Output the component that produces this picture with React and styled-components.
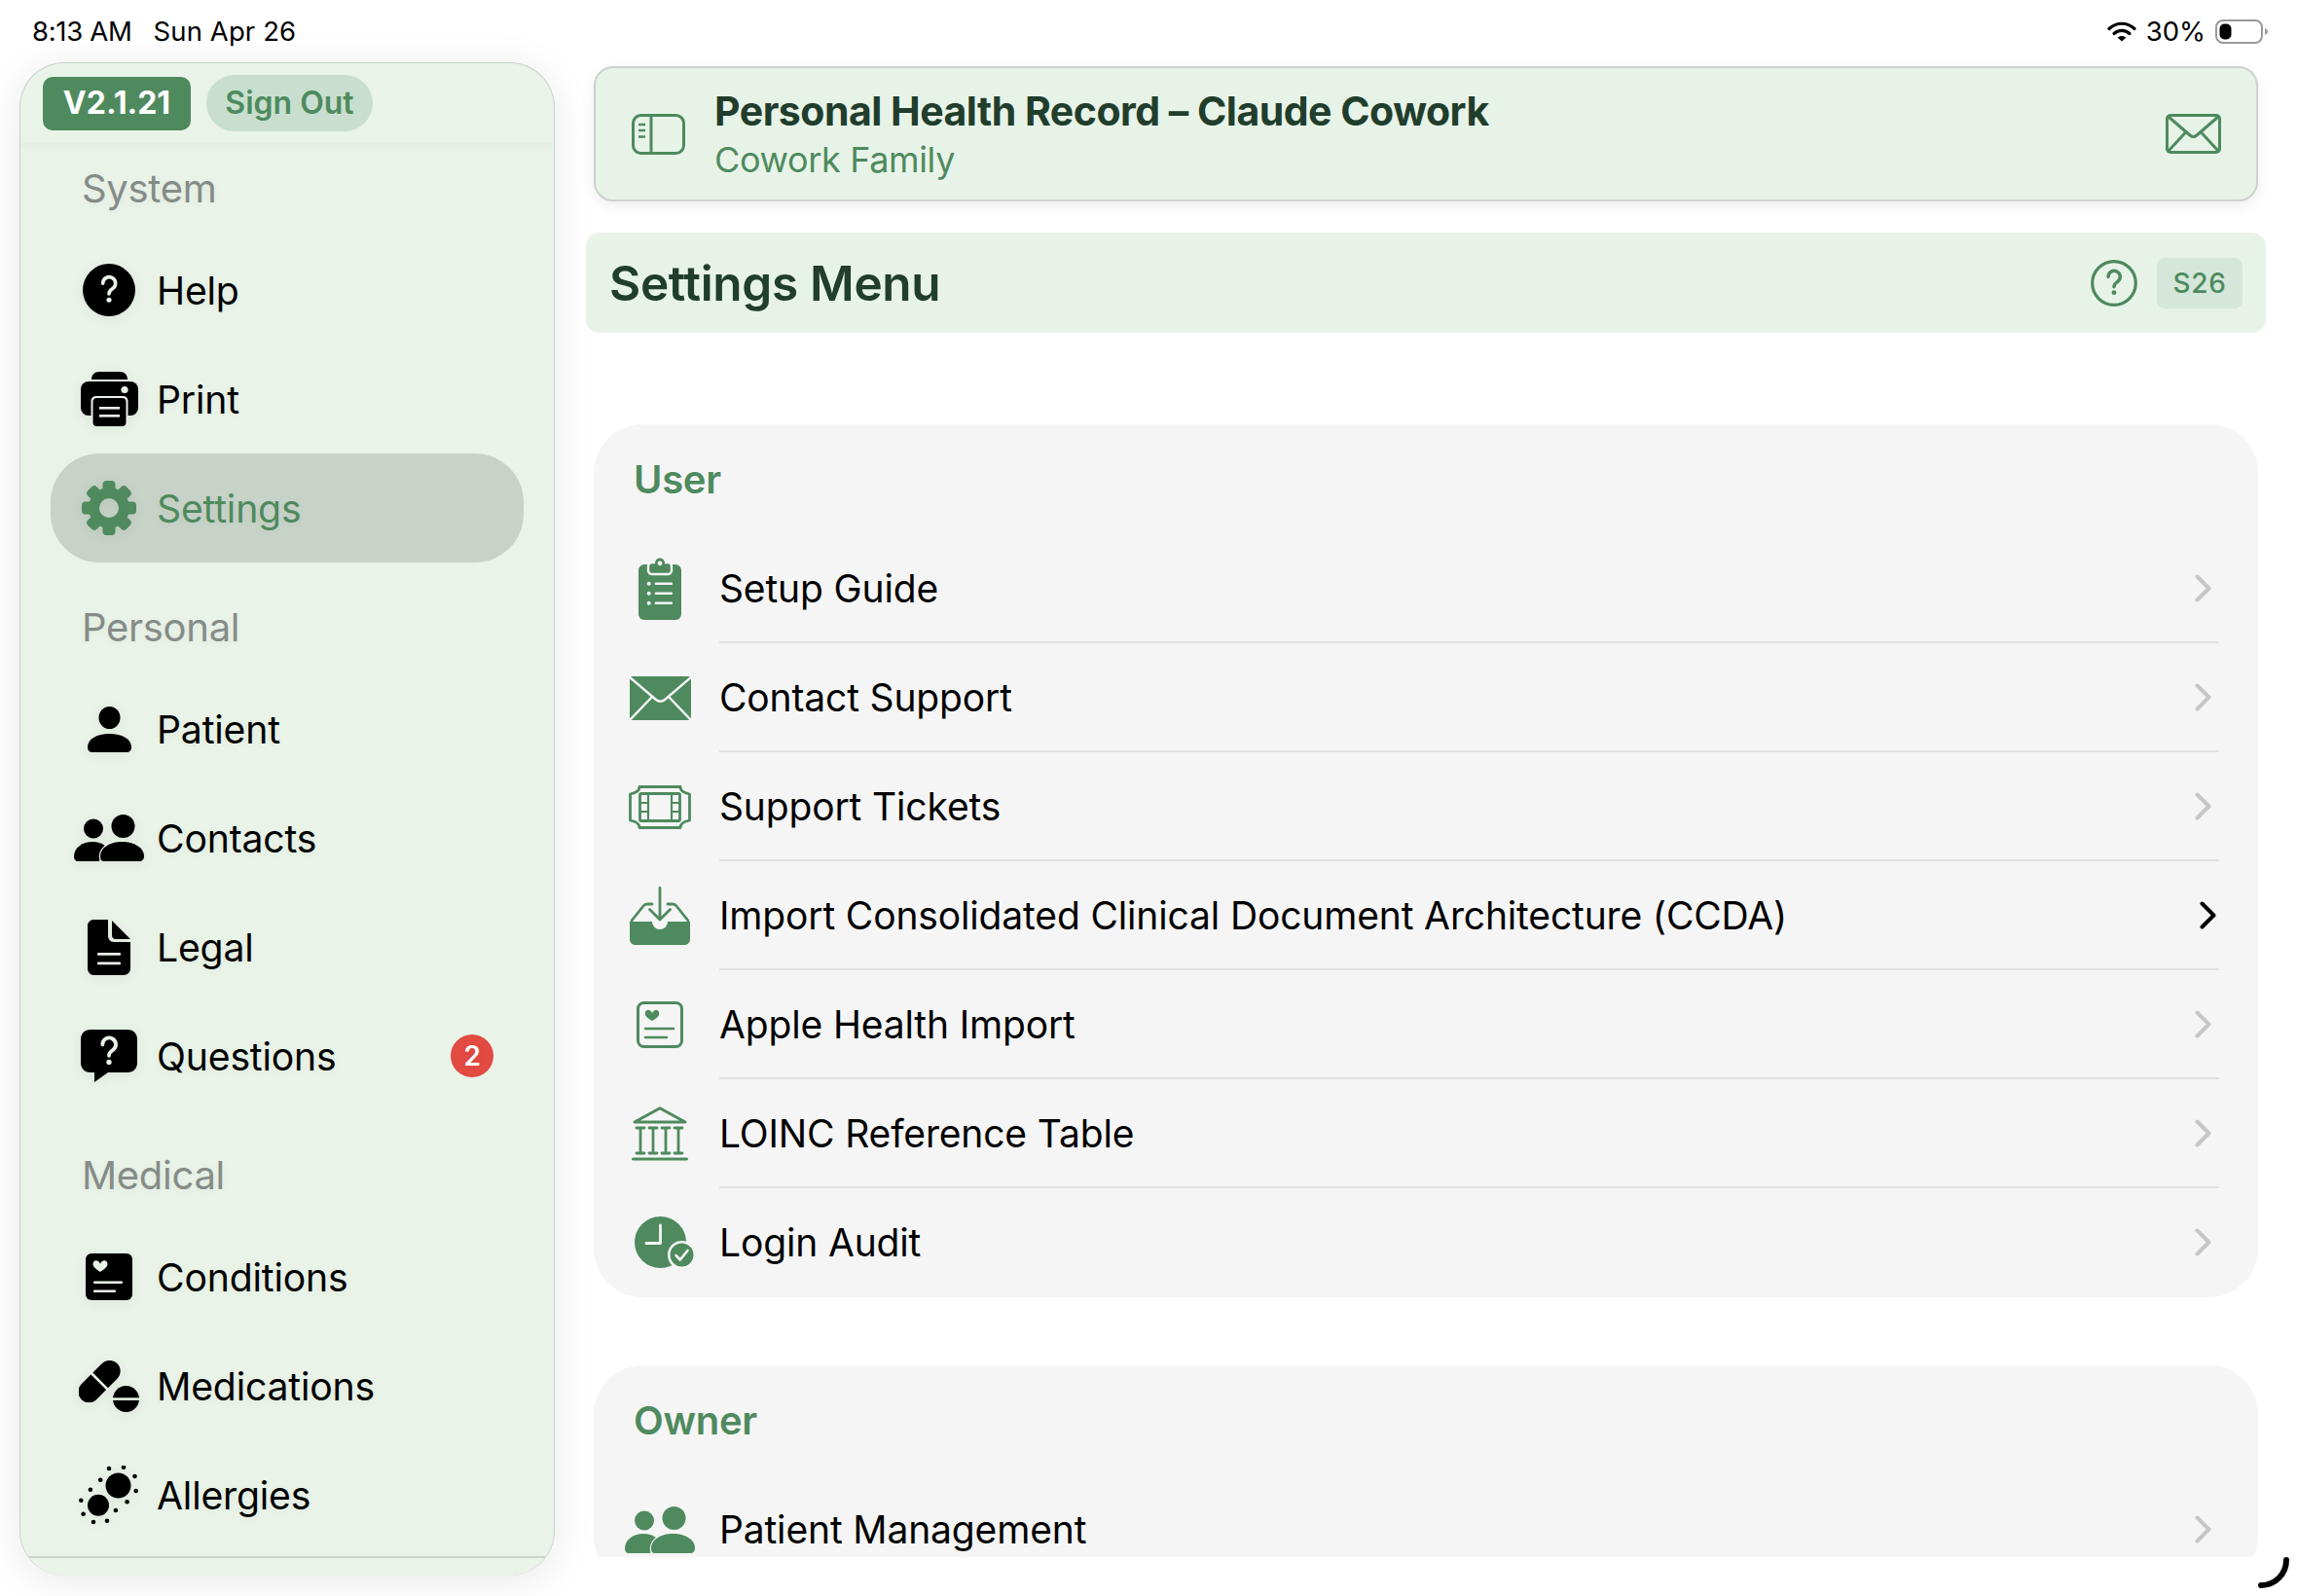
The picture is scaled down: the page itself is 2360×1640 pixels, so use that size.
import React from "react";
import styled, { createGlobalStyle } from "styled-components";

const GREEN = "#4e8a5e";
const DARK = "#213d2c";
const SIDE_BG = "#e9f3e8";
const ACTIVE_BG = "#c8d3c8";
const CARD_BG = "#f5f5f5";

const GlobalStyle = createGlobalStyle`
  html, body {
    margin: 0;
    padding: 0;
    background: #fff;
    font-family: Inter, "Liberation Sans", sans-serif;
  }
  * { box-sizing: border-box; }
`;

const Page = styled.div`
  position: relative;
  width: 2360px;
  height: 1640px;
  overflow: hidden;
  background: #fff;
`;

/* ---------- status bar ---------- */
const StatusBar = styled.div`
  height: 64px;
  display: flex;
  align-items: center;
  padding: 0 30px 0 33px;
  font-size: 27.5px;
  color: #000;
`;
const StatusTime = styled.span`
  margin-right: 22px;
  letter-spacing: -0.3px;
`;
const StatusDate = styled.span`
  letter-spacing: 0.1px;
`;
const StatusRight = styled.div`
  margin-left: auto;
  display: flex;
  align-items: center;
  gap: 10px;
`;

/* ---------- layout ---------- */
const Body = styled.div`
  display: flex;
  align-items: flex-start;
  padding-left: 20px;
`;
const Sidebar = styled.aside`
  width: 550px;
  height: 1555px;
  flex-shrink: 0;
  display: flex;
  flex-direction: column;
  background: ${SIDE_BG};
  border: 1.5px solid #c9d1cb;
  border-bottom: none;
  border-radius: 46px;
  box-shadow: 0 6px 44px rgba(0, 0, 0, 0.09);
  overflow: hidden;
`;
const SideHeader = styled.div`
  height: 82px;
  flex-shrink: 0;
  display: flex;
  align-items: center;
  gap: 16px;
  padding-left: 23px;
  box-shadow: 0 3px 8px rgba(0, 0, 0, 0.035);
`;
const VersionBadge = styled.span`
  width: 152px;
  height: 55px;
  padding-bottom: 2px;
  display: flex;
  align-items: center;
  justify-content: center;
  background: ${GREEN};
  border-radius: 10px;
  color: #fff;
  font-size: 32px;
  font-weight: 700;
`;
const SignOut = styled.button`
  width: 171px;
  height: 58px;
  border: none;
  padding: 0 0 2px;
  border-radius: 29px;
  background: #c8dfcf;
  color: ${GREEN};
  font-family: inherit;
  font-size: 32px;
  font-weight: 600;
`;
const Nav = styled.nav`
  flex: 1;
  padding-top: 23px;
  text-shadow: 0 2px 8px rgba(0, 0, 0, 0.05);
`;
const NavGroup = styled.div`
  & + & {
    margin-top: 43px;
  }
`;
const GroupLabel = styled.div`
  height: 48px;
  line-height: 48px;
  margin: 0 0 24px 63px;
  font-size: 40px;
  font-weight: 420;
  color: #858c88;
  letter-spacing: -0.3px;
`;
const NavRow = styled.div`
  position: relative;
  height: 112px;
  margin: 0 31px;
  padding-left: 20px;
  display: flex;
  align-items: center;
  border-radius: 50px;
  background: ${(p) => (p.$active ? ACTIVE_BG : "transparent")};
  color: ${(p) => (p.$active ? GREEN : "#000")};
  font-size: 39.2px;
  letter-spacing: -0.2px;
`;
const NavIcon = styled.span`
  width: 80px;
  flex-shrink: 0;
  display: flex;
  align-items: center;
  justify-content: center;
  margin-right: 9px;
  filter: drop-shadow(0 2px 6px rgba(0, 0, 0, 0.06));
`;
const CountBadge = styled.span`
  position: absolute;
  right: 31px;
  top: 34px;
  width: 44px;
  height: 44px;
  border-radius: 50%;
  display: flex;
  align-items: center;
  justify-content: center;
  background: #e24a42;
  color: #fff;
  font-size: 28px;
  font-weight: 600;
`;
const SideFooter = styled.div`
  height: 20px;
  flex-shrink: 0;
  margin: 0 7px;
  border-top: 2px solid #c9d4cc;
`;

const Main = styled.main`
  width: 1726px;
  margin-left: 32px;
  padding-top: 4px;
`;
const HeaderCard = styled.header`
  height: 139px;
  margin: 0 8px;
  padding: 0 36px 0 37px;
  display: flex;
  align-items: center;
  background: #e8f3e8;
  border: 2px solid #cdd2ce;
  border-radius: 20px;
  box-shadow: 0 5px 14px rgba(0, 0, 0, 0.07);
`;
const HeaderText = styled.div`
  margin-left: 30px;
  flex: 1;
`;
const AppTitle = styled.div`
  font-size: 41px;
  line-height: 52px;
  font-weight: 700;
  color: ${DARK};
  letter-spacing: -0.5px;
`;
const AppSub = styled.div`
  font-size: 36px;
  line-height: 46px;
  margin-top: 1px;
  color: ${GREEN};
  letter-spacing: -0.35px;
`;
const MenuBar = styled.div`
  height: 103px;
  margin-top: 32px;
  padding: 0 24px 0 24px;
  display: flex;
  align-items: center;
  background: #e8f3e8;
  border-radius: 14px;
`;
const MenuTitle = styled.h1`
  flex: 1;
  margin: 0;
  font-size: 49.5px;
  font-weight: 600;
  color: ${DARK};
  letter-spacing: -0.3px;
`;
const ScreenCode = styled.span`
  width: 88px;
  height: 52px;
  margin-left: 20px;
  display: flex;
  align-items: center;
  justify-content: center;
  background: #d5e7da;
  border-radius: 8px;
  color: ${GREEN};
  font-size: 28px;
  font-weight: 500;
  letter-spacing: 0.6px;
`;
const Scroller = styled.div`
  height: 1258px;
  overflow: hidden;
  padding: 94px 8px 0;
`;
const Card = styled.section`
  background: ${CARD_BG};
  border-radius: 50px;
  & + & {
    margin-top: 70px;
  }
`;
const CardTitle = styled.h2`
  height: 113px;
  margin: 0;
  padding: 29px 0 0 41px;
  font-size: 40px;
  line-height: 56px;
  font-weight: 600;
  color: ${GREEN};
  letter-spacing: -0.3px;
`;
const MenuRow = styled.div`
  height: 112px;
  display: flex;
  align-items: stretch;
`;
const RowIcon = styled.span`
  width: 92px;
  margin-left: 22px;
  margin-right: 15px;
  flex-shrink: 0;
  display: flex;
  align-items: center;
  justify-content: center;
`;
const RowBody = styled.div`
  flex: 1;
  margin-right: 40px;
  padding-right: ${(p) => (p.$hot ? "3px" : "8px")};
  display: flex;
  align-items: center;
  justify-content: space-between;
  border-bottom: 2px solid ${(p) => (p.$last ? "transparent" : "#e2e2e2")};
  font-size: 39px;
  color: #000;
  letter-spacing: -0.15px;
`;
const ClockSvg = styled.svg`
  margin-left: 11px;
`;
const BusyArc = styled.svg`
  position: absolute;
  right: 8px;
  bottom: 8px;
`;

/* ---------- drawings ---------- */
const Question = ({ cx, cy, s = 1, color }) => (
  <g transform={`translate(${cx} ${cy}) scale(${s})`}>
    <path
      d="M-7 -6.5a7.2 7.2 0 1 1 11.4 5.8C1.8 1.1 0 2.2 0 5.5"
      fill="none"
      stroke={color}
      strokeWidth="4"
      strokeLinecap="round"
    />
    <circle cx="0" cy="12.5" r="2.8" fill={color} />
  </g>
);

const HelpIcon = () => (
  <svg width="54" height="54" viewBox="0 0 54 54">
    <circle cx="27" cy="27" r="27" fill="#000" />
    <Question cx={27} cy={26} s={0.9} color={SIDE_BG} />
  </svg>
);

const PrintIcon = () => (
  <svg width="59" height="56" viewBox="0 0 59 56">
    <path d="M11 8C11 3 14 0 19 0H40C45 0 48 3 48 8Z" fill="#000" />
    <rect x="0" y="10" width="59" height="35" rx="8" fill="#000" />
    <rect x="10.5" y="25" width="38" height="33" rx="5" fill={SIDE_BG} />
    <rect x="12.5" y="27" width="34" height="29" rx="4" fill="#000" />
    <circle cx="45" cy="18.5" r="3.6" fill={SIDE_BG} />
    <rect x="19" y="36" width="21" height="2.6" fill={SIDE_BG} />
    <rect x="19" y="44" width="21" height="2.6" fill={SIDE_BG} />
  </svg>
);

const GearIcon = () => (
  <svg width="56" height="56" viewBox="0 0 56 56">
    {[0, 45, 90, 135, 180, 225, 270, 315].map((a) => (
      <rect
        key={a}
        x="21.5"
        y="0"
        width="13"
        height="14"
        rx="4"
        fill={GREEN}
        transform={`rotate(${a} 28 28)`}
      />
    ))}
    <circle cx="28" cy="28" r="15.5" fill="none" stroke={GREEN} strokeWidth="11" />
  </svg>
);

const PersonIcon = () => (
  <svg width="45" height="47" viewBox="0 0 45 47">
    <ellipse cx="22.5" cy="11.5" rx="11" ry="11.5" fill="#000" />
    <path d="M0 42C0 33 10 28 22.5 28S45 33 45 42C45 45 43 47 40 47H5C2 47 0 45 0 42Z" fill="#000" />
  </svg>
);

const PeopleIcon = ({ color, gap }) => (
  <svg width="72" height="48" viewBox="0 0 72 48">
    <circle cx="20" cy="14.5" r="10" fill={color} />
    <path d="M0 43C0 34 9 28 19 28C25 28 29 30 32 32L26 48H4C1.5 48 0 46 0 43Z" fill={color} />
    <circle cx="50.5" cy="12" r="12" fill={color} />
    <path
      d="M27 43C27 34 37 28 49.5 28S72 34 72 43C72 46 70 48 67 48H31C28 48 27 46 27 43Z"
      fill={color}
      stroke={gap}
      strokeWidth="2.5"
      paintOrder="stroke"
    />
  </svg>
);

const DocIcon = () => (
  <svg width="44" height="57" viewBox="0 0 44 57">
    <path d="M6 0H21V16C21 20 23 23 27 23H44V50C44 54 41 57 37 57H6C3 57 0 54 0 50V6C0 3 3 0 6 0Z" fill="#000" />
    <path d="M25 1L44 20H29C26.5 20 25 18.5 25 16Z" fill="#000" />
    <rect x="10" y="34" width="24" height="2.8" rx="1" fill={SIDE_BG} />
    <rect x="10" y="43.5" width="24" height="2.8" rx="1" fill={SIDE_BG} />
  </svg>
);

const BubbleIcon = () => (
  <svg width="58" height="54" viewBox="0 0 58 54">
    <path d="M10 0H48C54 0 58 4 58 10V34C58 40 54 44 48 44H28L14 54V44H10C4 44 0 40 0 34V10C0 4 4 0 10 0Z" fill="#000" />
    <Question cx={29} cy={21.5} s={0.95} color={SIDE_BG} />
  </svg>
);

const Heart = ({ x, y, s, color }) => (
  <path
    transform={`translate(${x} ${y}) scale(${s})`}
    d="M0 4C-1 1-4-1-6-1C-9-1-11 1.5-11 4.5C-11 9-5 13 0 16C5 13 11 9 11 4.5C11 1.5 9-1 6-1C4-1 1 1 0 4Z"
    fill={color}
  />
);

const CardHeartIcon = () => (
  <svg width="48" height="48" viewBox="0 0 48 48">
    <rect width="48" height="48" rx="6" fill="#000" />
    <Heart x={15} y={8} s={0.68} color={SIDE_BG} />
    <rect x="8" y="28.5" width="30" height="2.6" rx="1" fill={SIDE_BG} />
    <rect x="8" y="37.5" width="23" height="2.6" rx="1" fill={SIDE_BG} />
  </svg>
);

const PillsIcon = () => (
  <svg width="62" height="53" viewBox="0 0 62 53">
    <g transform="rotate(-45 21 21.5)">
      <rect x="-5" y="10.5" width="52" height="22" rx="11" fill="#000" />
      <rect x="20" y="8" width="2.6" height="27" fill={SIDE_BG} />
    </g>
    <circle cx="48.5" cy="39.5" r="13.5" fill="#000" />
    <rect x="33" y="38.3" width="29" height="2.6" fill={SIDE_BG} />
  </svg>
);

const ALLERGY_DOTS = [
  [31, 3],
  [46, 1.7],
  [57.5, 11],
  [58.7, 26],
  [49.6, 37.3],
  [37.9, 46],
  [29, 56.7],
  [15, 58],
  [4.6, 49.7],
  [2.3, 35.7],
  [11.9, 24.7],
  [22.2, 14.7],
];

const AllergyIcon = () => (
  <svg width="62" height="61" viewBox="0 0 62 61">
    <circle cx="40.5" cy="20.5" r="13" fill="#000" />
    <circle cx="20" cy="40.7" r="11" fill="#000" />
    {ALLERGY_DOTS.map(([x, y]) => (
      <circle key={x} cx={x} cy={y} r="2.3" fill="#000" />
    ))}
  </svg>
);

const SidebarToggleIcon = () => (
  <svg width="55" height="42" viewBox="0 0 55 42" fill="none" stroke={GREEN} strokeWidth="3">
    <rect x="1.5" y="1.5" width="52" height="39" rx="8" />
    <path d="M20 1.5V40.5" />
    <path d="M7 11H14M7 17H14M7 23.5H14" strokeWidth="2.4" />
  </svg>
);

const MailOutlineIcon = () => (
  <svg width="57" height="41" viewBox="0 0 57 41" fill="none" stroke={GREEN} strokeWidth="3" strokeLinejoin="round">
    <rect x="1.5" y="1.5" width="54" height="38" rx="3.5" />
    <path d="M3 3L25 22Q28.5 25 32 22L54 3" />
    <path d="M3 38L21 18.5M54 38L36 18.5" />
  </svg>
);

const QuestionCircleIcon = () => (
  <svg width="48" height="48" viewBox="0 0 48 48">
    <circle cx="24" cy="24" r="22.3" fill="none" stroke={GREEN} strokeWidth="3.2" />
    <Question cx={24} cy={23} s={0.85} color={GREEN} />
  </svg>
);

const ClipboardIcon = () => (
  <svg width="44" height="64" viewBox="0 0 44 64">
    <rect y="7" width="44" height="57" rx="6" fill={GREEN} />
    <rect x="10" y="5" width="24" height="12" rx="4" fill={GREEN} stroke={CARD_BG} strokeWidth="2.4" />
    <circle cx="22" cy="5.5" r="5" fill={GREEN} />
    <circle cx="22" cy="5.8" r="2.4" fill={CARD_BG} />
    {[26.7, 36.7, 46.7].map((y) => (
      <g key={y} fill={CARD_BG}>
        <circle cx="10.7" cy={y} r="2" />
        <rect x="16.7" y={y - 1.2} width="18.3" height="2.4" rx="1" />
      </g>
    ))}
  </svg>
);

const MailFilledIcon = () => (
  <svg width="63" height="45" viewBox="0 0 63 45">
    <rect width="63" height="45" rx="3" fill={GREEN} />
    <g fill="none" stroke={CARD_BG} strokeWidth="2.4">
      <path d="M0 1L27 24Q31.5 27.5 36 24L63 1" />
      <path d="M0 45L23 21M63 45L40 21" />
    </g>
  </svg>
);

const TicketIcon = () => (
  <svg width="64" height="45" viewBox="0 0 64 45" fill="none" stroke={GREEN} strokeWidth="2.8">
    <path d="M11 1.5H53C53 5 55 7.5 62.5 9V36C55 37.5 53 40 53 43.5H11C11 40 9 37.5 1.5 36V9C9 7.5 11 5 11 1.5Z" strokeLinejoin="round" />
    <rect x="11.5" y="8.5" width="41" height="28" rx="1.5" />
    <path d="M20 8.5V36.5M44 8.5V36.5M11.5 18H20M11.5 27H20M44 18H52.5M44 27H52.5" strokeWidth="2.2" />
  </svg>
);

const ImportIcon = () => (
  <svg width="62" height="60" viewBox="0 0 62 60" fill="none">
    <path d="M0 36H62V54C62 57.5 59.5 60 56 60H6C2.5 60 0 57.5 0 54Z" fill={GREEN} />
    <circle cx="31" cy="36" r="8" fill={CARD_BG} />
    <g stroke={GREEN} strokeWidth="2.8" strokeLinecap="round" strokeLinejoin="round">
      <path d="M2 35L14 20Q15.5 18 18 18H23M60 35L48 20Q46.5 18 44 18H39" />
      <path d="M31 1.5V34M20.5 23.5L31 34L41.5 23.5" />
    </g>
  </svg>
);

const HealthCardIcon = () => (
  <svg width="48" height="48" viewBox="0 0 48 48" fill="none">
    <rect x="1.5" y="1.5" width="45" height="45" rx="6" stroke={GREEN} strokeWidth="3" />
    <Heart x={16} y={9.5} s={0.66} color={GREEN} />
    <path d="M9 28H38M9 37H31" stroke={GREEN} strokeWidth="2.6" strokeLinecap="round" />
  </svg>
);

const BuildingIcon = () => (
  <svg width="58" height="56" viewBox="0 0 58 56" fill="none" stroke={GREEN} strokeWidth="3" strokeLinecap="round" strokeLinejoin="round">
    <path d="M3 16L29 1.8L55 16Z" />
    {[9, 22, 35, 48].map((x) => (
      <path key={x} d={`M${x} 22V47M${x - 4} 22H${x + 4}M${x - 4} 48H${x + 4}`} strokeWidth="2.8" />
    ))}
    <path d="M1.5 54H56.5" />
  </svg>
);

const ClockCheckIcon = () => (
  <ClockSvg width="63" height="54" viewBox="0 0 63 54">
    <circle cx="26.5" cy="26.5" r="26.5" fill={GREEN} />
    <path d="M26.5 9V27.5H12" fill="none" stroke={CARD_BG} strokeWidth="2.8" strokeLinecap="round" strokeLinejoin="round" />
    <circle cx="48.5" cy="39.5" r="13.3" fill={GREEN} stroke={CARD_BG} strokeWidth="2.6" />
    <path d="M42.5 40L46.8 44.5L54.5 35" fill="none" stroke={CARD_BG} strokeWidth="2.6" strokeLinecap="round" strokeLinejoin="round" />
  </ClockSvg>
);

const Chevron = ({ hot }) => (
  <svg width="17" height="29" viewBox="0 0 17 29" fill="none">
    <path
      d="M2.5 2.5L14.5 14.5L2.5 26.5"
      stroke={hot ? "#000" : "#c6c6c6"}
      strokeWidth="4"
      strokeLinecap="round"
      strokeLinejoin="round"
    />
  </svg>
);

const WifiIcon = () => (
  <svg width="30" height="21" viewBox="0 0 30 21" fill="none" stroke="#000" strokeLinecap="round">
    <path d="M2 7.5C9.5 0.5 20.5 0.5 28 7.5" strokeWidth="3.2" />
    <path d="M7 12.5C11.5 8.3 18.5 8.3 23 12.5" strokeWidth="3.2" />
    <path d="M15 20.5L10.5 16.5C13 14.4 17 14.4 19.5 16.5Z" fill="#000" stroke="none" />
  </svg>
);

const BatteryIcon = () => (
  <svg width="54" height="25" viewBox="0 0 54 25">
    <rect x="1" y="1" width="47" height="23" rx="7" fill="none" stroke="#999" strokeWidth="2" />
    <rect x="4.5" y="4.5" width="12" height="16" rx="5" fill="#000" />
    <path d="M51 9C53 10 54 11 54 12.5S53 15 51 16Z" fill="#999" />
  </svg>
);

/* ---------- content ---------- */
const NAV = [
  {
    label: "System",
    rows: [
      { name: "Help", icon: <HelpIcon /> },
      { name: "Print", icon: <PrintIcon /> },
      { name: "Settings", icon: <GearIcon />, active: true },
    ],
  },
  {
    label: "Personal",
    rows: [
      { name: "Patient", icon: <PersonIcon /> },
      { name: "Contacts", icon: <PeopleIcon color="#000" gap={SIDE_BG} /> },
      { name: "Legal", icon: <DocIcon /> },
      { name: "Questions", icon: <BubbleIcon />, count: 2 },
    ],
  },
  {
    label: "Medical",
    rows: [
      { name: "Conditions", icon: <CardHeartIcon /> },
      { name: "Medications", icon: <PillsIcon /> },
      { name: "Allergies", icon: <AllergyIcon /> },
    ],
  },
];

const USER_ROWS = [
  { name: "Setup Guide", icon: <ClipboardIcon /> },
  { name: "Contact Support", icon: <MailFilledIcon /> },
  { name: "Support Tickets", icon: <TicketIcon /> },
  { name: "Import Consolidated Clinical Document Architecture (CCDA)", icon: <ImportIcon />, hot: true },
  { name: "Apple Health Import", icon: <HealthCardIcon /> },
  { name: "LOINC Reference Table", icon: <BuildingIcon /> },
  { name: "Login Audit", icon: <ClockCheckIcon /> },
];

const OWNER_ROWS = [
  { name: "Patient Management", icon: <PeopleIcon color={GREEN} gap={CARD_BG} /> },
];

const MenuCard = ({ title, rows }) => (
  <Card>
    <CardTitle>{title}</CardTitle>
    {rows.map((r, i) => (
      <MenuRow key={r.name}>
        <RowIcon>{r.icon}</RowIcon>
        <RowBody $hot={r.hot} $last={i === rows.length - 1}>
          <span>{r.name}</span>
          <Chevron hot={r.hot} />
        </RowBody>
      </MenuRow>
    ))}
  </Card>
);

export default function App() {
  return (
    <Page>
      <GlobalStyle />
      <StatusBar>
        <StatusTime>8:13 AM</StatusTime>
        <StatusDate>Sun Apr 26</StatusDate>
        <StatusRight>
          <WifiIcon />
          <span>30%</span>
          <BatteryIcon />
        </StatusRight>
      </StatusBar>
      <Body>
        <Sidebar>
          <SideHeader>
            <VersionBadge>V2.1.21</VersionBadge>
            <SignOut>Sign Out</SignOut>
          </SideHeader>
          <Nav>
            {NAV.map((g) => (
              <NavGroup key={g.label}>
                <GroupLabel>{g.label}</GroupLabel>
                {g.rows.map((r) => (
                  <NavRow key={r.name} $active={r.active}>
                    <NavIcon>{r.icon}</NavIcon>
                    {r.name}
                    {r.count && <CountBadge>{r.count}</CountBadge>}
                  </NavRow>
                ))}
              </NavGroup>
            ))}
          </Nav>
          <SideFooter />
        </Sidebar>
        <Main>
          <HeaderCard>
            <SidebarToggleIcon />
            <HeaderText>
              <AppTitle>Personal Health Record – Claude Cowork</AppTitle>
              <AppSub>Cowork Family</AppSub>
            </HeaderText>
            <MailOutlineIcon />
          </HeaderCard>
          <MenuBar>
            <MenuTitle>Settings Menu</MenuTitle>
            <QuestionCircleIcon />
            <ScreenCode>S26</ScreenCode>
          </MenuBar>
          <Scroller>
            <MenuCard title="User" rows={USER_ROWS} />
            <MenuCard title="Owner" rows={OWNER_ROWS} />
          </Scroller>
        </Main>
      </Body>
      <BusyArc width="32" height="32" viewBox="0 0 32 32" fill="none">
        <path d="M29 3C29 17 18 29 3 29" stroke="#000" strokeWidth="6" strokeLinecap="round" />
      </BusyArc>
    </Page>
  );
}
